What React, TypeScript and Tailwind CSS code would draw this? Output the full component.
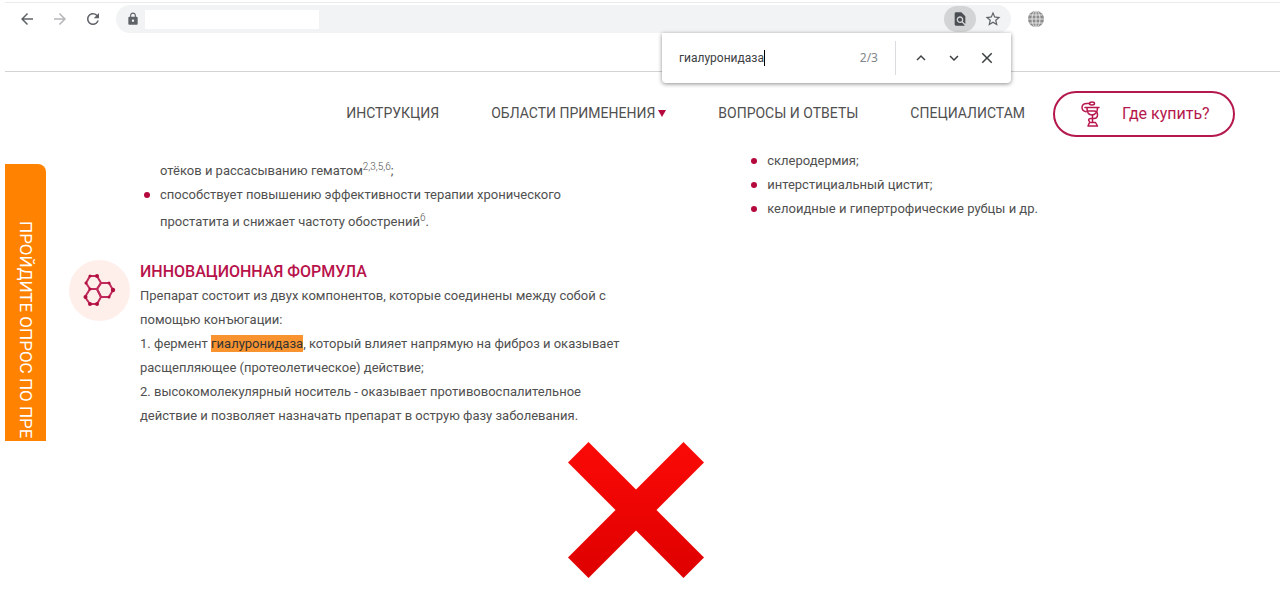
import React from "react";
import {
  MdArrowBack,
  MdArrowForward,
  MdClose,
  MdFindInPage,
  MdKeyboardArrowDown,
  MdKeyboardArrowUp,
  MdLock,
  MdRefresh,
  MdStarBorder,
} from "react-icons/md";

const indications = [
  "склеродермия;",
  "интерстициальный цистит;",
  "келоидные и гипертрофические рубцы и др.",
];

const GlobeIcon = () => (
  <svg viewBox="0 0 18 18" className="h-[18px] w-[18px]" aria-hidden="true">
    <circle cx="9" cy="9" r="8" fill="#8c8c8c" />
    <g fill="none" stroke="#e4e4e4" strokeWidth="1">
      <ellipse cx="9" cy="9" rx="4" ry="8" />
      <path d="M9 1v16M1 9h16M2.4 5h13.2M2.4 13h13.2" />
    </g>
  </svg>
);

const PharmacyIcon = () => (
  <svg
    viewBox="0 0 22 28"
    className="h-7 w-[22px]"
    fill="none"
    stroke="#b8184f"
    strokeWidth="1.5"
    strokeLinecap="round"
    strokeLinejoin="round"
    aria-hidden="true"
  >
    <path d="M9.5 3.5H7C3.5 3.5 2 5.4 2 7.6c0 2.4 1.6 3.8 4 4.2" />
    <ellipse cx="12" cy="3.5" rx="2.5" ry="1.5" />
    <path d="M5 7.5h14M7 8c0 4.2 2 7 5 7s5.500-2.800 5.500-7" />
    <path d="M7 11h7c2.5 0 3.5 1.5 3.5 3.8s-1.500 3.700-3.500 3.700h-3.500c-2 0-2.500 1.800-1 3" />
    <path d="M12.5 15v7M9.5 22.5h6l2 3.500H8z" />
  </svg>
);

const MoleculeIcon = () => (
  <svg viewBox="0 0 34 36" className="h-9 w-[34px]" aria-hidden="true">
    <g fill="none" stroke="#c02a5c" strokeWidth="2">
      <path d="M7 3h7l4 7-4 6H7l-4-6z" />
      <path d="M14 16l4-6h8l4 7-4 7h-8z" />
      <path d="M7 16h7l4 8-4 7H7l-5-7z" />
    </g>
    <g fill="#b0103f">
      <circle cx="14" cy="3" r="2" />
      <circle cx="7" cy="3" r="1.5" />
      <circle cx="3" cy="10" r="1.5" />
      <circle cx="26" cy="10" r="1.5" />
      <circle cx="30" cy="17" r="2.2" />
      <circle cx="26" cy="24" r="1.5" />
      <circle cx="7" cy="16" r="1.5" />
      <circle cx="2.5" cy="24" r="2" />
      <circle cx="7" cy="31" r="2" />
      <circle cx="14" cy="31" r="2" />
    </g>
  </svg>
);

const CrossMark = () => (
  <svg viewBox="0 0 136 136" className="h-[136px] w-[136px]" role="img" aria-label="Неверно">
    <defs>
      <linearGradient id="cross" x1="0" y1="0" x2="0" y2="1">
        <stop offset="0" stopColor="#fb0a06" />
        <stop offset="1" stopColor="#de0000" />
      </linearGradient>
    </defs>
    <path
      d="M20.5 0L68 47.5 115.5 0 136 20.5 88.5 68 136 115.5 115.5 136 68 88.5 20.5 136 0 115.5 47.5 68 0 20.5z"
      fill="url(#cross)"
    />
  </svg>
);

const FindBar = () => (
  <div className="absolute top-[33px] right-[269px] flex h-[50px] w-[349px] items-center rounded-b-sm bg-white pr-[15px] pl-[17px] text-xs text-[#3c4043] shadow-[0_1px_4px_rgba(0,0,0,0.45)]">
    <input
      id="find"
      type="text"
      aria-label="Найти на странице"
      defaultValue="гиалуронидаза"
      className="h-5 [field-sizing:content] outline-none"
    />
    <span className="h-4 w-px bg-black" />
    <span className="ml-auto font-['Noto_Sans',sans-serif] text-[#80868b]">2/3</span>
    <span className="mr-4 ml-[17px] h-[34px] w-px bg-[#dadce0]" />
    <div className="flex gap-[15px] text-[18px]">
      <button type="button" aria-label="Предыдущее">
        <MdKeyboardArrowUp />
      </button>
      <button type="button" aria-label="Следующее">
        <MdKeyboardArrowDown />
      </button>
      <button type="button" aria-label="Закрыть">
        <MdClose />
      </button>
    </div>
  </div>
);

const BrowserBar = () => (
  <header className="relative h-[72px] border-b border-[#d3d3d3] pt-[2px]">
    <div className="flex items-center border-t border-[#ebebeb] pt-[2px] text-[#5f6368]">
      <div className="flex gap-[15px] pl-[13px] text-[18px]">
        <button type="button" aria-label="Назад">
          <MdArrowBack />
        </button>
        <button type="button" aria-label="Вперёд" className="text-[#b4b6b8]">
          <MdArrowForward />
        </button>
        <button type="button" aria-label="Обновить">
          <MdRefresh />
        </button>
      </div>
      <div className="ml-[14px] flex h-7 flex-1 items-center rounded-full bg-[#f1f3f4] pl-[10px]">
        <MdLock className="text-[14px]" />
        <input
          type="text"
          aria-label="Адресная строка"
          className="ml-[5px] h-[19px] w-[174px] bg-white outline-none"
        />
        <button
          type="button"
          aria-label="Поиск на странице"
          className="ml-auto flex h-[26px] w-8 items-center justify-center rounded-full bg-[#d2d4d6] text-[#4a4d51]"
        >
          <MdFindInPage className="text-base" />
        </button>
        <button type="button" aria-label="В закладки" className="mr-[9px] ml-2">
          <MdStarBorder className="text-[18px]" />
        </button>
      </div>
      <div className="mr-[235px] ml-4">
        <GlobeIcon />
      </div>
    </div>
    <FindBar />
  </header>
);

const SiteNav = () => (
  <nav className="flex items-center justify-end pt-[19px] pr-[45px] text-sm text-[#505050]">
    <div className="flex gap-[52px] pb-[2px]">
      <a href="#instruction">ИНСТРУКЦИЯ</a>
      <a href="#areas" className="flex items-center gap-[3px]">
        ОБЛАСТИ ПРИМЕНЕНИЯ
        <svg viewBox="0 0 8 7" className="h-[7px] w-2" aria-hidden="true">
          <path d="M0 0h8L4 7z" fill="#b5083d" />
        </svg>
      </a>
      <a href="#faq">ВОПРОСЫ И ОТВЕТЫ</a>
      <a href="#specialists">СПЕЦИАЛИСТАМ</a>
    </div>
    <button
      type="button"
      className="ml-7 flex h-[46px] w-[182px] items-center gap-5 rounded-full border-2 border-[#b5184c] pl-[25px] text-base text-[#b5184c]"
    >
      <PharmacyIcon />
      Где купить?
    </button>
  </nav>
);

const Bullet = () => (
  <span className="mt-[9px] h-[6px] w-[6px] shrink-0 rounded-full bg-[#b5083d]" />
);

const App: React.FC = () => {
  return (
    <div className="bg-white pl-[5px] font-[Roboto,sans-serif] text-[#505050]">
      <BrowserBar />
      <SiteNav />

      <main className="text-[13px] leading-6">
        <div className="flex items-start pt-3">
          <aside className="mt-[15px] h-[277px] w-[41px] shrink-0 overflow-hidden rounded-tr-lg bg-[#ff8200] text-white">
            <a
              href="#survey"
              className="block pt-[57px] text-[17px] leading-[41px] whitespace-nowrap [writing-mode:vertical-rl]"
            >
              ПРОЙДИТЕ ОПРОС ПО ПРЕ
            </a>
          </aside>

          <div className="ml-[23px] grid flex-1 grid-cols-[56%_44%]">
            <div className="pt-[10px]">
              <ul className="pl-[75px]">
                <li className="pl-4">
                  отёков и рассасыванию гематом
                  <sup className="text-[10px] leading-none font-light">2,3,5,6</sup>;
                </li>
                <li className="flex gap-[10px]">
                  <Bullet />
                  <div>
                    <p>способствует повышению эффективности терапии хронического</p>
                    <p className="pt-[3px]">
                      простатита и снижает частоту обострений
                      <sup className="text-[10px] leading-none font-light">6</sup>.
                    </p>
                  </div>
                </li>
              </ul>

              <section className="mt-[26px] flex items-start gap-[10px]">
                <div className="flex h-[61px] w-[61px] shrink-0 items-center justify-center rounded-full bg-[#feefeb]">
                  <MoleculeIcon />
                </div>
                <div className="max-w-[490px]">
                  <h2 className="text-base leading-6 font-medium text-[#b8124a]">
                    ИННОВАЦИОННАЯ ФОРМУЛА
                  </h2>
                  <p>
                    Препарат состоит из двух компонентов, которые соединены между собой с
                    помощью конъюгации:
                  </p>
                  <p>
                    1. фермент{" "}
                    <mark className="bg-[#f9932f] py-px text-[#333]">гиалуронидаза</mark>, который
                    влияет напрямую на фиброз и оказывает расщепляющее (протеолетическое)
                    действие;
                  </p>
                  <p>
                    2. высокомолекулярный носитель - оказывает противовоспалительное
                    <br />
                    действие и позволяет назначать препарат в острую фазу заболевания.
                  </p>
                </div>
              </section>
            </div>

            <ul className="pl-1">
              {indications.map((item) => (
                <li key={item} className="flex gap-[10px]">
                  <Bullet />
                  {item}
                </li>
              ))}
            </ul>
          </div>
        </div>

        <div className="flex justify-center pt-px pr-[13px]">
          <CrossMark />
        </div>
      </main>
    </div>
  );
};

export default App;
